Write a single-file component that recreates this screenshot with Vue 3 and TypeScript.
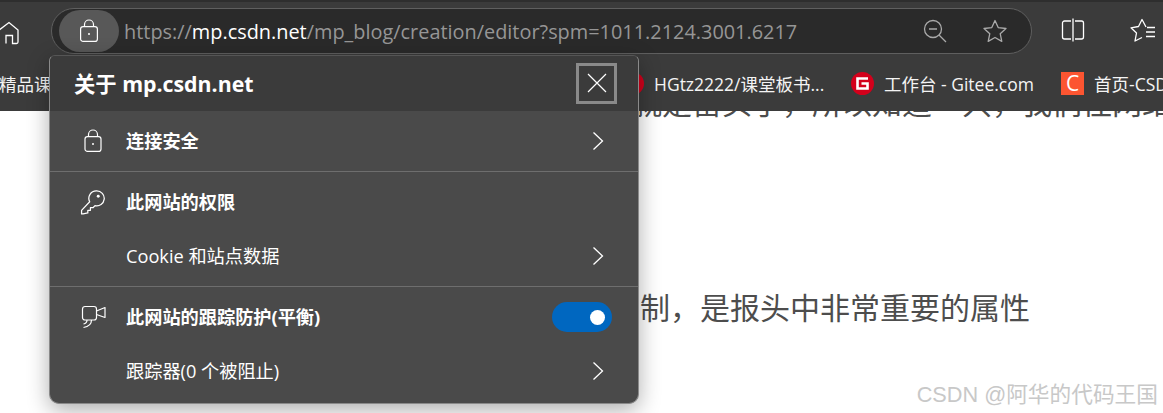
<template>
  <div class="page">
    <header class="toolbar">
      <button class="home">
        <svg width="24" height="24" viewBox="0 0 24 24" fill="none" stroke="#fff" stroke-width="1.3">
          <path d="M-4 11.5 L9 1.5 L18 9 V21 a1.5 1.5 0 0 1-1.5 1.5 H12.5 V14.5 H6 V22.5" />
        </svg>
      </button>
      <div class="urlbar">
        <span class="lock-pill">
          <svg width="20" height="24" viewBox="0 0 20 24" fill="none" stroke="#fff" stroke-width="1.2">
            <rect x="1.6" y="7.6" width="16.8" height="14.8" rx="2.5" />
            <path d="M5.5 7.5 V5.5 a4.5 4.5 0 0 1 9 0 V7.5" />
            <circle cx="10" cy="15" r="1" fill="#fff" stroke="none" />
          </svg>
        </span>
        <span class="url"><span class="dim">https://</span>mp.csdn.net<span class="dim">/mp_blog/creation/editor?spm=1011.2124.3001.6217</span></span>
        <svg class="bar-icon" width="24" height="24" viewBox="0 0 24 24" fill="none" stroke="#aaa" stroke-width="1.3">
          <circle cx="10" cy="10" r="8.5" />
          <path d="M6 10 H14 M16 16 L23 23" />
        </svg>
        <svg class="bar-icon star" width="26" height="26" viewBox="0 0 26 26" fill="none" stroke="#aaa" stroke-width="1.3" stroke-linejoin="round">
          <path d="M13 2.5 L16.2 9.6 L24 10.5 L18.2 15.7 L19.8 23.4 L13 19.5 L6.2 23.4 L7.8 15.7 L2 10.5 L9.8 9.6 Z" />
        </svg>
      </div>
      <svg class="tool split" width="24" height="24" viewBox="0 0 24 24" fill="none" stroke="#fff" stroke-width="1.3">
        <path d="M10 3 H3.5 A2 2 0 0 0 1.5 5 V19 A2 2 0 0 0 3.5 21 H10 M14 3 H20.5 A2 2 0 0 1 22.5 5 V19 A2 2 0 0 1 20.5 21 H14 M12 0.5 V23.5" />
      </svg>
      <svg class="tool" width="26" height="26" viewBox="0 0 26 26" fill="none" stroke="#fff" stroke-width="1.3" stroke-linejoin="round">
        <path d="M16 9 L12 1.5 L8.5 8.5 L1 9.8 L6.5 15 L5 23 L12 19.5 M17 9.5 H25 M16 14 H25 M16 18.5 H25" />
      </svg>
    </header>

    <nav class="bookmarks">
      <span class="bm first">精品课</span>
      <span class="bm gitee-cut">
        <svg class="g-logo" width="23" height="23" viewBox="0 0 23 23">
          <circle cx="11.5" cy="11.5" r="11.5" fill="#d3001b" />
          <path d="M17 6.5 H6.5 V16.5 H16.5 V11.5 H10.5" fill="none" stroke="#fff" stroke-width="2.6" />
        </svg>
        HGtz2222/课堂板书...
      </span>
      <span class="bm gitee">
        <svg class="g-logo" width="23" height="23" viewBox="0 0 23 23">
          <circle cx="11.5" cy="11.5" r="11.5" fill="#d3001b" />
          <path d="M17 6.5 H6.5 V16.5 H16.5 V11.5 H10.5" fill="none" stroke="#fff" stroke-width="2.6" />
        </svg>
        工作台 - Gitee.com
      </span>
      <span class="bm">
        <span class="c-logo">C</span>
        首页-CSDN
      </span>
    </nav>

    <main class="content">
      <p class="line top">就是苗头了，所以知道一只，我们往网络</p>
      <p class="line mid">制，是报头中非常重要的属性</p>
      <span class="mark">CSDN @阿华的代码王国</span>
    </main>

    <section class="popup">
      <div class="pop-head">
        <span class="pop-title">关于 mp.csdn.net</span>
        <button class="close">
          <svg width="20" height="20" viewBox="0 0 20 20" stroke="#fff" stroke-width="1.2">
            <path d="M1 1 L19 19 M19 1 L1 19" />
          </svg>
        </button>
      </div>
      <div class="pop-body">
        <div v-for="group in groups" :key="group.id" class="group">
          <div v-for="row in group.rows" :key="row.text" class="row">
            <span class="row-icon">
              <svg v-if="row.icon === 'lock'" class="lock-icon" width="20" height="24" viewBox="0 0 20 24" fill="none" stroke="#fff" stroke-width="1.2">
                <rect x="2" y="7.6" width="16" height="14.8" rx="2.5" />
                <path d="M5.5 7.5 V5.5 a4.5 4.5 0 0 1 9 0 V7.5" />
                <circle cx="10" cy="15" r="1" fill="#fff" stroke="none" />
              </svg>
              <svg v-else-if="row.icon === 'key'" class="key-icon" width="25" height="25" viewBox="0 0 24 24" fill="none" stroke="#fff" stroke-width="1.2" stroke-linejoin="round">
                <path d="M16 0.8 a7.2 7.2 0 1 1 -1.6 14.2 L12.5 17 H10 V19.5 H7.5 V22 L3 23 H1.5 V19.5 L9.3 11.3 A7.2 7.2 0 0 1 16 0.8 Z" />
                <circle cx="17.5" cy="6" r="1.4" fill="#fff" stroke="none" />
              </svg>
              <svg v-else-if="row.icon === 'camera'" width="26" height="24" viewBox="0 0 26 24" fill="none" stroke="#fff" stroke-width="1.2" stroke-linejoin="round">
                <rect x="1.5" y="1.5" width="14" height="13.5" rx="2.5" />
                <path d="M15.5 6 L24 2.5 V12.5 L15.5 9.5" />
                <path d="M10.5 15 C10.5 19 8 21.5 2.5 22.5 M6 15 C6 17.5 5 18.5 2.5 19" />
              </svg>
            </span>
            <span class="row-text" :class="{ strong: row.strong }">{{ row.text }}</span>
            <span v-if="row.toggle" class="toggle"><i class="knob"></i></span>
            <svg v-if="row.arrow" class="chev" width="12" height="20" viewBox="0 0 12 20" fill="none" stroke="#fff" stroke-width="1.3">
              <path d="M1.5 1.5 L10.5 10 L1.5 18.5" />
            </svg>
          </div>
        </div>
      </div>
    </section>
  </div>
</template>

<script setup lang="ts">
interface Row {
  text: string
  icon?: 'lock' | 'key' | 'camera'
  strong?: boolean
  arrow?: boolean
  toggle?: boolean
}

const groups: { id: string; rows: Row[] }[] = [
  { id: 'conn', rows: [{ text: '连接安全', icon: 'lock', strong: true, arrow: true }] },
  {
    id: 'perm',
    rows: [
      { text: '此网站的权限', icon: 'key', strong: true },
      { text: 'Cookie 和站点数据', arrow: true }
    ]
  },
  {
    id: 'track',
    rows: [
      { text: '此网站的跟踪防护(平衡)', icon: 'camera', strong: true, toggle: true },
      { text: '跟踪器(0 个被阻止)', arrow: true }
    ]
  }
]
</script>

<style>
html,
body {
  margin: 0;
  background: #fff;
}
</style>

<style scoped>
.page {
  position: relative;
  width: 1163px;
  height: 413px;
  overflow: hidden;
  background: #fff;
  font-family: "Open Sans", "Noto Sans CJK SC", sans-serif;
}
.toolbar {
  height: 55px;
  box-sizing: border-box;
  padding-top: 8px;
  background: #3b3b3b;
  border-top: 2px solid #2e2e2e;
  display: flex;
  align-items: flex-start;
}
.home {
  width: 51px;
  height: 46px;
  padding: 0;
  border: none;
  background: none;
  display: flex;
  align-items: center;
  justify-content: flex-start;
}
.urlbar {
  width: 981px;
  height: 46px;
  margin-top: -2px;
  box-sizing: border-box;
  border: 1.5px solid #5f5f5f;
  border-radius: 23px;
  background: #2a2a2a;
  display: flex;
  align-items: center;
  padding: 0 23px 0 7px;
}
.lock-pill {
  width: 60px;
  height: 42px;
  border-radius: 21px;
  background: #585858;
  display: flex;
  align-items: center;
  justify-content: center;
  flex: none;
}
.url {
  margin-left: 5px;
  font-size: 19.9px;
  color: #fff;
  white-space: nowrap;
  flex: 1;
}
.dim {
  color: #969696;
}
.bar-icon {
  flex: none;
}
.star {
  margin-left: 35px;
}
.tool {
  flex: none;
  margin-top: 8px;
}
.split {
  margin-left: 29px;
  margin-right: 45px;
}
.bookmarks {
  height: 56px;
  background: #3b3b3b;
  color: #f4f4f4;
  font-size: 17.5px;
  display: flex;
  align-items: center;
  white-space: nowrap;
  overflow: hidden;
}
.bm {
  display: flex;
  align-items: center;
  gap: 10px;
  flex: none;
}
.first {
  width: 622px;
  margin-left: -1px;
}
.gitee-cut {
  width: 230px;
}
.gitee {
  width: 210px;
}
.g-logo {
  flex: none;
}
.c-logo {
  width: 23px;
  height: 23px;
  background: #fc5531;
  color: #fff;
  font-size: 21px;
  line-height: 23px;
  text-align: center;
}
.content {
  height: 302px;
  position: relative;
  color: #4d4d4d;
  font-size: 30px;
  overflow: hidden;
}
.line {
  margin: 0;
  line-height: 40px;
  white-space: nowrap;
}
.top {
  margin-top: -28px;
  padding-left: 632px;
}
.mid {
  margin-top: 165px;
  padding-left: 640px;
}
.mark {
  position: absolute;
  right: 5px;
  bottom: 5px;
  font-family: "Liberation Sans", "Noto Sans CJK SC", sans-serif;
  font-size: 21.7px;
  color: #c8c8c8;
}
.popup {
  position: absolute;
  left: 49px;
  top: 55px;
  width: 590px;
  height: 349px;
  box-sizing: border-box;
  border: 1.5px solid #8a8a8a;
  border-top-color: #555;
  border-radius: 6px 6px 10px 10px;
  background: #4a4a4a;
  color: #fff;
  box-shadow: 0 6px 22px rgba(0, 0, 0, 0.32);
  overflow: hidden;
}
.pop-head {
  height: 55px;
  background: #3b3b3b;
  display: flex;
  align-items: center;
  justify-content: space-between;
  padding: 0 20px 0 24px;
}
.pop-title {
  font-size: 21.3px;
  font-weight: 700;
  position: relative;
  top: -1px;
}
.close {
  width: 41px;
  height: 41px;
  box-sizing: border-box;
  padding: 0;
  margin-top: -1px;
  margin-right: 1px;
  background: none;
  border: 3px solid #8a8a8a;
  display: flex;
  align-items: center;
  justify-content: center;
}
.group {
  border-bottom: 1px solid #6e6e6e;
  padding: 3px 0;
}
.group:last-child {
  border-bottom: none;
}
.row {
  height: 54px;
  display: flex;
  align-items: center;
  padding-right: 34px;
}
.row-icon {
  width: 76px;
  padding-left: 31px;
  box-sizing: border-box;
  display: flex;
  flex: none;
}
.lock-icon {
  margin-left: 2px;
}
.key-icon {
  margin-left: -1px;
}
.row-text {
  flex: 1;
  font-size: 18.2px;
  position: relative;
  top: -1px;
}
.strong {
  font-weight: 700;
}
.chev {
  flex: none;
}
.toggle {
  width: 60px;
  height: 30px;
  border-radius: 15px;
  background: #0067c0;
  margin-right: -8px;
  display: flex;
  align-items: center;
  justify-content: flex-end;
  padding-right: 7px;
  box-sizing: border-box;
}
.knob {
  width: 15px;
  height: 15px;
  border-radius: 50%;
  background: #fff;
}
</style>
